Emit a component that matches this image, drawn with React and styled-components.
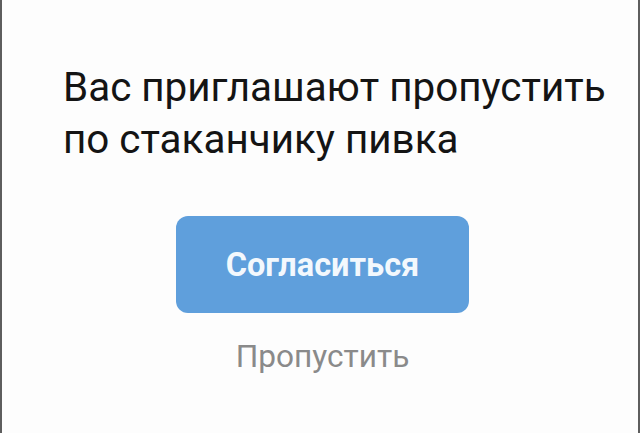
import React from "react";
import styled, { createGlobalStyle } from "styled-components";

const GlobalStyle = createGlobalStyle`
  html, body {
    margin: 0;
    padding: 0;
    background: #ffffff;
  }
  body {
    font-family: Roboto, "Noto Sans", sans-serif;
  }
`;

const Screen = styled.div`
  box-sizing: border-box;
  width: 640px;
  height: 433px;
  background: #fdfdfd;
  border-left: 2px solid #5e5e5e;
  border-right: 2px solid #5e5e5e;
  overflow: hidden;
  display: flex;
  flex-direction: column;
`;

const Title = styled.h1`
  margin: 62px 0 0 61px;
  font-family: Roboto, "Noto Sans", sans-serif;
  font-weight: 400;
  font-size: 40.4px;
  line-height: 52px;
  color: #141414;
  letter-spacing: 0;
`;

const Actions = styled.div`
  margin-top: 50px;
  padding-left: 5px;
  display: flex;
  flex-direction: column;
  align-items: center;
`;

const PrimaryButton = styled.button`
  width: 293px;
  height: 97px;
  border: none;
  border-radius: 12px;
  background: #5f9fdc;
  color: #f3f8fd;
  font-family: Roboto, "Noto Sans", sans-serif;
  font-weight: 700;
  font-size: 32.5px;
  cursor: pointer;
`;

const SecondaryButton = styled.button`
  margin-top: 24px;
  border: none;
  background: none;
  padding: 0;
  color: #8a8a8a;
  font-family: Roboto, "Noto Sans", sans-serif;
  font-weight: 400;
  font-size: 31.6px;
  line-height: 40px;
  cursor: pointer;
`;

export default function App() {
  return (
    <>
      <GlobalStyle />
      <Screen>
        <Title>
          Вас приглашают пропустить
          <br />
          по стаканчику пивка
        </Title>
        <Actions>
          <PrimaryButton>Согласиться</PrimaryButton>
          <SecondaryButton>Пропустить</SecondaryButton>
        </Actions>
      </Screen>
    </>
  );
}
